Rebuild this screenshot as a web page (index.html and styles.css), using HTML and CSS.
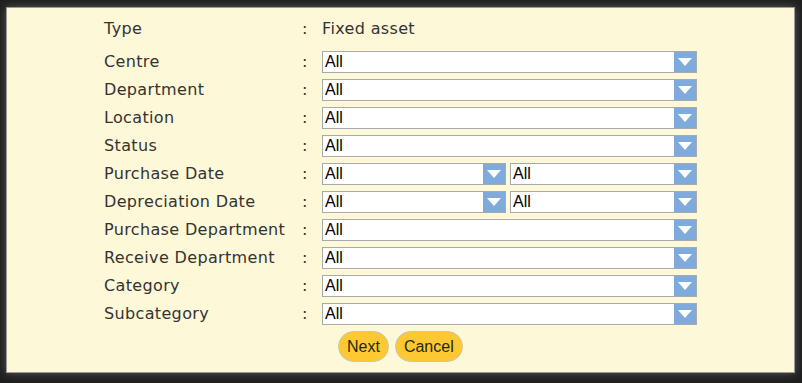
FILE: index.html
```html
<!DOCTYPE html>
<html lang="en">
<head>
  <meta charset="UTF-8">
  <title>Asset Report</title>
  <link rel="stylesheet" href="styles.css">
</head>
<body>
<div class="panel">
  <div class="form">
    <div class="lbl first">Type</div><div class="colon first">:</div>
    <div class="value first">Fixed asset</div>

    <div class="lbl">Centre</div><div class="colon">:</div>
    <div class="combo"><span>All</span><i class="arrow"></i></div>

    <div class="lbl">Department</div><div class="colon">:</div>
    <div class="combo"><span>All</span><i class="arrow"></i></div>

    <div class="lbl">Location</div><div class="colon">:</div>
    <div class="combo"><span>All</span><i class="arrow"></i></div>

    <div class="lbl">Status</div><div class="colon">:</div>
    <div class="combo"><span>All</span><i class="arrow"></i></div>

    <div class="lbl">Purchase Date</div><div class="colon">:</div>
    <div class="pair">
      <div class="combo"><span>All</span><i class="arrow"></i></div>
      <div class="combo"><span>All</span><i class="arrow"></i></div>
    </div>

    <div class="lbl">Depreciation Date</div><div class="colon">:</div>
    <div class="pair">
      <div class="combo"><span>All</span><i class="arrow"></i></div>
      <div class="combo"><span>All</span><i class="arrow"></i></div>
    </div>

    <div class="lbl">Purchase Department</div><div class="colon">:</div>
    <div class="combo"><span>All</span><i class="arrow"></i></div>

    <div class="lbl">Receive Department</div><div class="colon">:</div>
    <div class="combo"><span>All</span><i class="arrow"></i></div>

    <div class="lbl">Category</div><div class="colon">:</div>
    <div class="combo"><span>All</span><i class="arrow"></i></div>

    <div class="lbl">Subcategory</div><div class="colon">:</div>
    <div class="combo"><span>All</span><i class="arrow"></i></div>
  </div>

  <div class="buttons">
    <button type="button">Next</button>
    <button type="button">Cancel</button>
  </div>
</div>
</body>
</html>
```

FILE: styles.css
```css
html, body {
  height: 100%;
}
body {
  margin: 0;
  padding: 7px 7px 10px 6px;
  box-sizing: border-box;
  background-color: #1f1f1f;
  font-family: "DejaVu Sans", Verdana, sans-serif;
  color: #333;
}
.panel {
  height: 100%;
  box-sizing: border-box;
  background-color: #fdf8d8;
  border: 1px solid #9a9a9a;
  box-shadow: 0 0 8px #5a5a5a;
  padding: 10px 0 0 97px;
}
.form {
  display: grid;
  grid-template-columns: 198px 20px 375px;
  row-gap: 6px;
  align-items: center;
}
.lbl, .colon, .value {
  font-size: 16px;
  letter-spacing: 0.35px;
  line-height: 22px;
}
.first {
  margin-bottom: 5px;
}
.combo {
  display: flex;
  height: 22px;
  box-sizing: border-box;
  border: 1px solid #a9a9a9;
  background-color: #fff;
  font-family: "Liberation Sans", Arial, sans-serif;
  font-size: 16px;
  color: #000;
}
.combo span {
  flex: 1;
  line-height: 20px;
  padding-left: 2px;
}
.arrow {
  width: 22px;
  background-color: #7eaadc;
  display: flex;
  align-items: center;
  justify-content: center;
}
.arrow::before {
  content: "";
  border-left: 7px solid transparent;
  border-right: 7px solid transparent;
  border-top: 8px solid #fff;
}
.pair {
  display: grid;
  grid-template-columns: 184px 187px;
  column-gap: 4px;
}
.buttons {
  display: flex;
  gap: 6px;
  margin: 6px 0 0 234px;
}
button {
  height: 31px;
  padding: 0 8px;
  background-color: #fec832;
  border: 1px solid #c8c8b0;
  border-radius: 16px;
  font-family: "Liberation Sans", Arial, sans-serif;
  font-size: 16px;
  color: #1c2a10;
}
```
